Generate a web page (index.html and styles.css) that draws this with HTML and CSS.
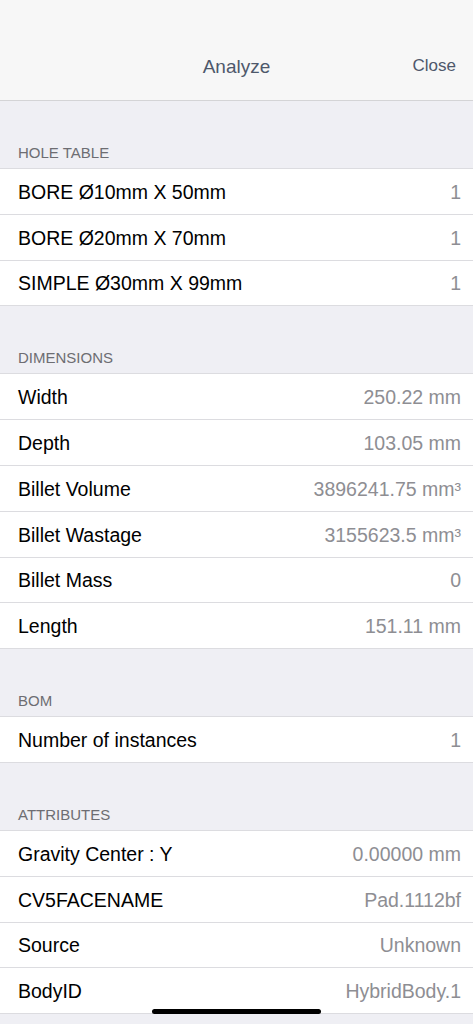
FILE: index.html
```html
<!DOCTYPE html>
<html lang="en">
<head>
    <meta charset="UTF-8">
    <meta name="viewport" content="width=device-width, initial-scale=1.0">
    <title>Analyze</title>
    <link rel="stylesheet" href="styles.css">
</head>
<body>
    <div class="nav-bar">
        <div class="nav-title">Analyze</div>
        <a href="#" class="nav-close">Close</a>
    </div>

    <div class="section">
        <div class="section-header">HOLE TABLE</div>
        <div class="rows">
            <div class="row"><span class="row-label">BORE Ø10mm X 50mm</span><span class="row-value">1</span></div>
            <div class="row"><span class="row-label">BORE Ø20mm X 70mm</span><span class="row-value">1</span></div>
            <div class="row"><span class="row-label">SIMPLE Ø30mm X 99mm</span><span class="row-value">1</span></div>
        </div>
    </div>

    <div class="section">
        <div class="section-header">DIMENSIONS</div>
        <div class="rows">
            <div class="row"><span class="row-label">Width</span><span class="row-value">250.22 mm</span></div>
            <div class="row"><span class="row-label">Depth</span><span class="row-value">103.05 mm</span></div>
            <div class="row"><span class="row-label">Billet Volume</span><span class="row-value">3896241.75 mm³</span></div>
            <div class="row"><span class="row-label">Billet Wastage</span><span class="row-value">3155623.5 mm³</span></div>
            <div class="row"><span class="row-label">Billet Mass</span><span class="row-value">0</span></div>
            <div class="row"><span class="row-label">Length</span><span class="row-value">151.11 mm</span></div>
        </div>
    </div>

    <div class="section">
        <div class="section-header">BOM</div>
        <div class="rows">
            <div class="row"><span class="row-label">Number of instances</span><span class="row-value">1</span></div>
        </div>
    </div>

    <div class="section">
        <div class="section-header">ATTRIBUTES</div>
        <div class="rows">
            <div class="row"><span class="row-label">Gravity Center : Y</span><span class="row-value">0.00000 mm</span></div>
            <div class="row"><span class="row-label">CV5FACENAME</span><span class="row-value">Pad.1112bf</span></div>
            <div class="row"><span class="row-label">Source</span><span class="row-value">Unknown</span></div>
            <div class="row"><span class="row-label">BodyID</span><span class="row-value">HybridBody.1</span></div>
        </div>
    </div>

    <div class="home-indicator"></div>
</body>
</html>
```

FILE: styles.css
```css
body {
    margin: 0;
    height: 1024px;
    overflow: hidden;
    background-color: #efeff4;
    font-family: "Liberation Sans", Arial, sans-serif;
    position: relative;
}
.nav-bar {
    height: 101px;
    background-color: #f7f7f7;
    border-bottom: 1px solid #d4d4d6;
    box-sizing: border-box;
    display: flex;
    align-items: flex-end;
    justify-content: center;
    padding-bottom: 22px;
    position: relative;
}
.nav-title {
    font-size: 19px;
    color: #4e586b;
}
.nav-close {
    position: absolute;
    right: 17px;
    bottom: 24px;
    font-size: 17px;
    color: #4e586b;
    text-decoration: none;
}
.section-header {
    height: 68px;
    box-sizing: border-box;
    display: flex;
    align-items: flex-end;
    padding: 0 0 7px 18px;
    font-size: 15px;
    color: #6d6d72;
    border-bottom: 1px solid #dcdce0;
}
.rows {
    background-color: white;
}
.row {
    height: 45.8px;
    box-sizing: border-box;
    display: flex;
    align-items: center;
    justify-content: space-between;
    padding: 2px 12px 0 18px;
    border-bottom: 1px solid #dcdce0;
    font-size: 19.5px;
}
.row-label {
    color: #000;
}
.row-value {
    color: #8e8e93;
}
.home-indicator {
    position: absolute;
    left: 152px;
    bottom: 10px;
    width: 169px;
    height: 5px;
    border-radius: 3px;
    background-color: #000;
}
```
